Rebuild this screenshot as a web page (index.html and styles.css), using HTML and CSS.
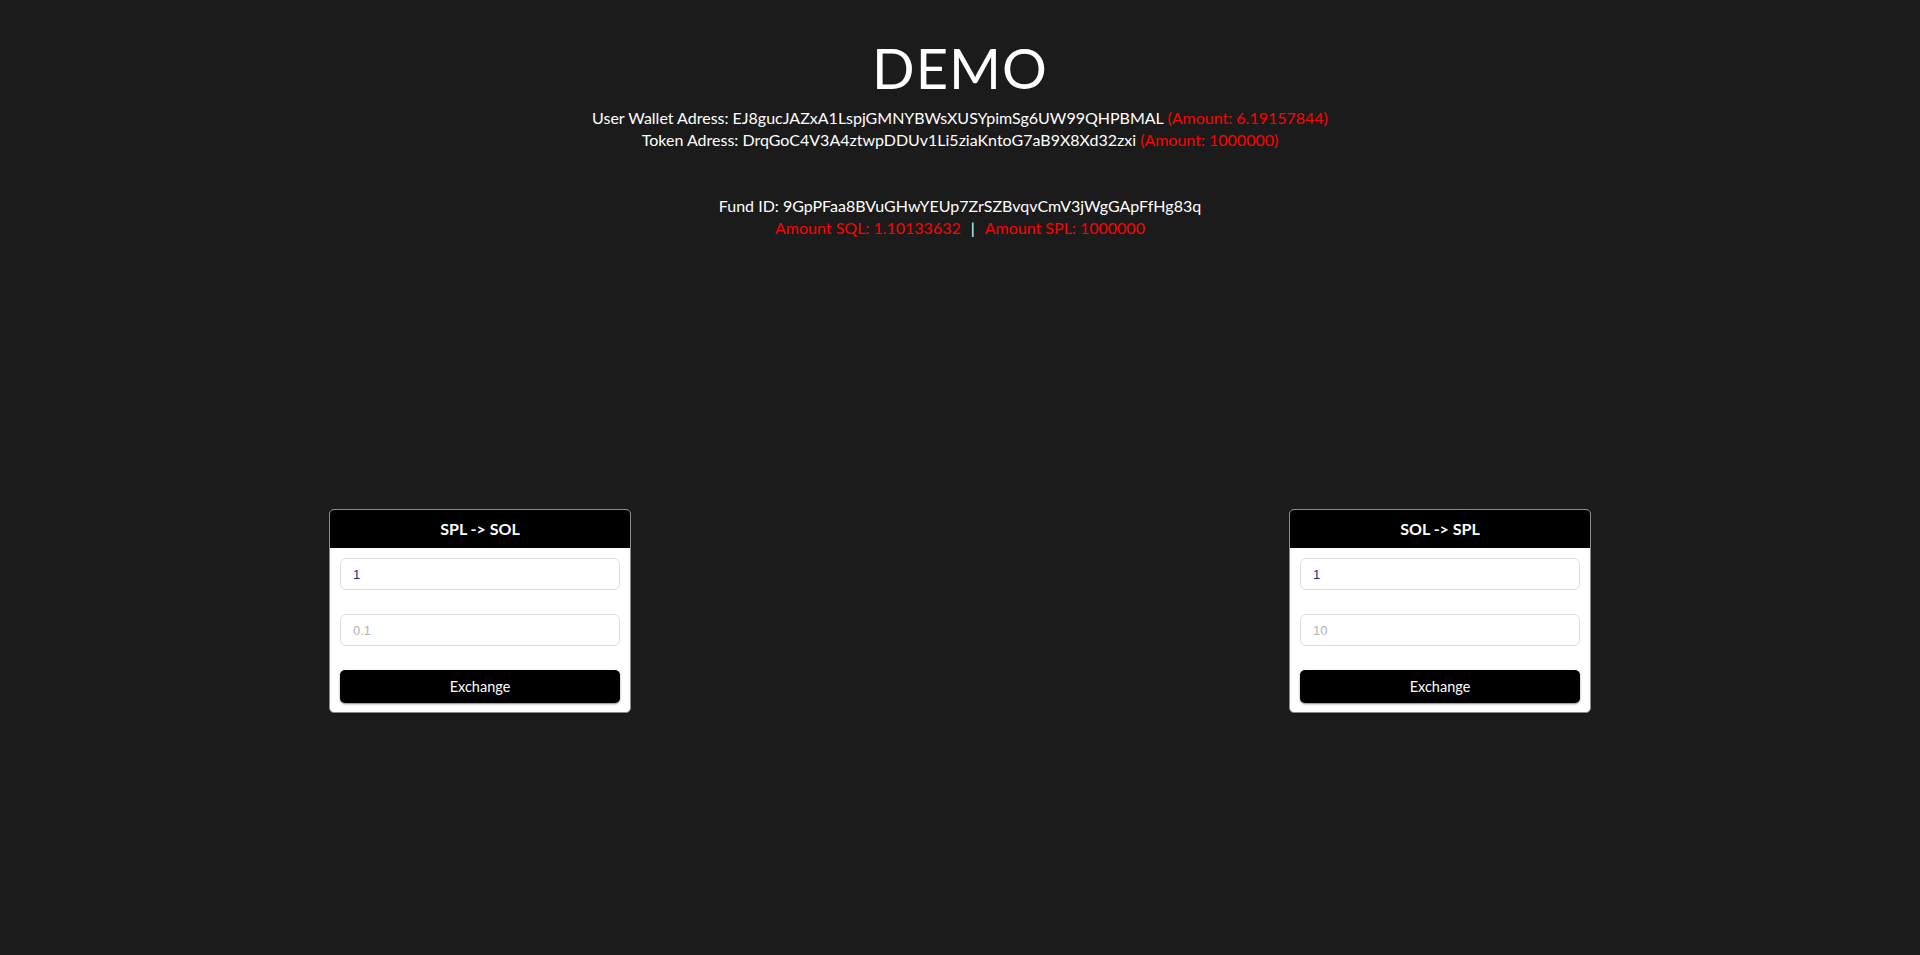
FILE: index.html
```html
<!DOCTYPE html>
<html>
<head>
<meta charset="utf-8">
<title>DEMO</title>
<link rel="stylesheet" href="styles.css">
</head>
<body>
<header class="top">
  <h1 class="title">DEMO</h1>
  <p class="line">User Wallet Adress: EJ8gucJAZxA1LspjGMNYBWsXUSYpimSg6UW99QHPBMAL <span class="red">(Amount: 6.19157844)</span></p>
  <p class="line">Token Adress: DrqGoC4V3A4ztwpDDUv1Li5ziaKntoG7aB9X8Xd32zxi <span class="red">(Amount: 1000000)</span></p>
  <div class="fund">
    <p class="line">Fund ID: 9GpPFaa8BVuGHwYEUp7ZrSZBvqvCmV3jWgGApFfHg83q</p>
    <p class="line"><span class="red">Amount SQL: 1.10133632</span><span class="sep">|</span><span class="red">Amount SPL: 1000000</span></p>
  </div>
</header>
<main class="cards">
  <section class="card">
    <div class="card-head">SPL -&gt; SOL</div>
    <div class="card-body">
      <input class="field" type="text" value="1">
      <input class="field" type="text" placeholder="0.1">
      <button class="btn">Exchange</button>
    </div>
  </section>
  <section class="card">
    <div class="card-head">SOL -&gt; SPL</div>
    <div class="card-body">
      <input class="field" type="text" value="1">
      <input class="field" type="text" placeholder="10">
      <button class="btn">Exchange</button>
    </div>
  </section>
</main>
</body>
</html>
```
FILE: styles.css
```css
html, body {
  margin: 0;
  padding: 0;
  background: #1b1b1b;
}
body {
  min-height: 955px;
  color: #ffffff;
  font-family: "Lato", "Open Sans", sans-serif;
}
.top {
  text-align: center;
  padding-top: 33px;
}
.title {
  margin: 0 0 4px;
  font-size: 56px;
  font-weight: 400;
  line-height: 70px;
  letter-spacing: 1px;
}
.line {
  margin: 0;
  font-size: 16px;
  line-height: 22px;
}
.red {
  color: #ff0000;
}
.sep {
  color: #ffffff;
  margin: 0 10px;
}
.fund {
  margin-top: 44px;
}
.cards {
  display: grid;
  grid-template-columns: 1fr 1fr;
  justify-items: center;
  margin-top: 270px;
}
.card {
  width: 300px;
  border: 1px solid #8a8a8a;
  border-radius: 5px;
  background: #ffffff;
  overflow: hidden;
}
.card-head {
  background: #000000;
  color: #ffffff;
  height: 38px;
  line-height: 38px;
  text-align: center;
  font-weight: 700;
  font-size: 16px;
}
.card-body {
  display: flex;
  flex-direction: column;
  padding: 10px 10px 9px 10px;
  gap: 24px;
}
.field {
  box-sizing: border-box;
  width: 280px;
  height: 32px;
  margin: 0;
  border: 1px solid #dcdcdc;
  border-radius: 6px;
  padding: 0 12px;
  font-family: "Liberation Sans", Arial, sans-serif;
  font-size: 13px;
  color: #1e2a78;
  outline: none;
  background: #ffffff;
}
.field::placeholder {
  color: #b4b4b4;
}
.btn {
  box-sizing: border-box;
  width: 280px;
  height: 33px;
  margin: 0;
  border: none;
  border-radius: 5px;
  background: #000000;
  color: #ffffff;
  font-family: "Lato", "Open Sans", sans-serif;
  font-size: 14.5px;
  box-shadow: 0 1px 2px rgba(0, 0, 0, 0.5);
  cursor: pointer;
}
```
